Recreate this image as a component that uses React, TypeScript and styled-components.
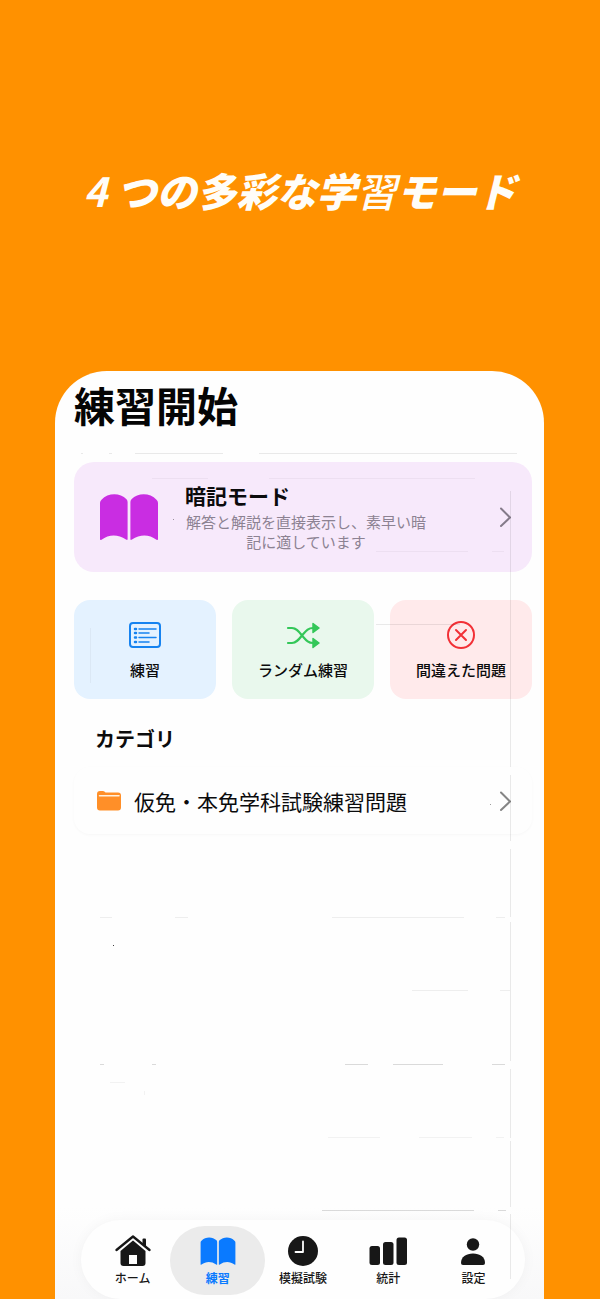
import React from "react";
import styled, { createGlobalStyle } from "styled-components";

const GlobalStyle = createGlobalStyle`
  *, *::before, *::after { box-sizing: border-box; }
  html, body { margin: 0; height: 100%; background: #ff9100; }
  #root { min-height: 100%; display: flex; }
  body, button, a {
    font-family: "Noto Sans CJK JP", sans-serif;
    color: #0b0b0c;
  }
`;

const Page = styled.div`
  flex: 1;
  min-width: 0;
  min-height: 100vh;
  display: flex;
  flex-direction: column;
  background: #ff9100;
`;

const Hero = styled.header`
  padding: 160px 16px 151px;
  text-align: center;
`;

const HeroTitle = styled.h1`
  margin: 0;
  color: #fffdf8;
  font-size: 40px;
  line-height: 60px;
  font-weight: 900;
  font-style: italic;
  white-space: nowrap;
`;

const Digit = styled.span`
  font-weight: 700;
`;

const Light = styled.span`
  font-weight: 500;
`;

const Phone = styled.main`
  position: relative;
  flex: 1;
  display: flex;
  flex-direction: column;
  margin: 0 56px 0 55px;
  border-radius: 52px 52px 0 0;
  background: #fefefe;
`;

const Lines = styled.svg`
  position: absolute;
  inset: 0;
  width: 100%;
  height: 100%;
  pointer-events: none;
`;

const Content = styled.div`
  display: flex;
  flex-direction: column;
  padding: 3px 12px 0 19px;
`;

const ScreenTitle = styled.h2`
  margin: 0 0 28px;
  font-size: 41px;
  line-height: 60px;
  font-weight: 700;
  color: #050505;
`;

const MemoryCard = styled.button`
  display: flex;
  align-items: center;
  height: 110px;
  padding: 0 20px 0 25px;
  border: 0;
  border-radius: 20px;
  background: #f7e9fb;
  text-align: left;
`;

const MemoryText = styled.span`
  flex: 1;
  display: flex;
  flex-direction: column;
  gap: 2px;
  padding: 0 0 2px 26px;
`;

const MemoryTitle = styled.span`
  font-size: 21px;
  line-height: 30px;
  font-weight: 700;
`;

const MemoryNote = styled.span`
  width: 242px;
  font-size: 15px;
  line-height: 20px;
  color: #8c8292;
  text-align: center;
`;

const Modes = styled.div`
  display: grid;
  grid-template-columns: repeat(3, 1fr);
  gap: 16px;
  margin-top: 28px;
`;

const Mode = styled.button<{ $tint: string }>`
  display: flex;
  flex-direction: column;
  align-items: center;
  gap: 6px;
  height: 99px;
  padding: 18px 0 0;
  border: 0;
  border-radius: 16px;
  background: ${(p) => p.$tint};
  font-size: 15px;
  line-height: 24px;
  font-weight: 500;
  white-space: nowrap;
`;

const SectionTitle = styled.h3`
  margin: 25px 0 0 21px;
  font-size: 20px;
  line-height: 30px;
  font-weight: 700;
`;

const Category = styled.a`
  display: flex;
  align-items: center;
  height: 67px;
  margin-top: 13px;
  padding: 0 20px 0 22px;
  border-radius: 16px;
  box-shadow: 0 1px 3px #00000008;
  text-decoration: none;
`;

const CategoryName = styled.span`
  flex: 1;
  padding-left: 12px;
  font-size: 21px;
  line-height: 30px;
`;

const TabArea = styled.div`
  margin-top: auto;
  padding: 14px 19px 0 26px;
  background: linear-gradient(#fefefe, #f8f8f9);
`;

const TabBar = styled.nav`
  display: grid;
  grid-template-columns: repeat(5, 1fr);
  height: 79px;
  padding: 6px 9px 4px;
  border-radius: 40px;
  background: #fefefe;
  box-shadow: 0 0 14px #0000000a;
`;

const Tab = styled.a<{ $active?: boolean }>`
  display: flex;
  flex-direction: column;
  align-items: center;
  gap: 1px;
  height: 69px;
  margin: 0 -5px;
  padding-top: 8px;
  border-radius: 35px;
  background: ${(p) => (p.$active ? "#ebebeb" : "transparent")};
  color: ${(p) => (p.$active ? "#0a7aff" : "#171717")};
  font-size: 12px;
  line-height: 18px;
  font-weight: ${(p) => (p.$active ? 700 : 500)};
  text-decoration: none;
  white-space: nowrap;
`;

const Book = ({ width, height, color }: { width: number; height: number; color: string }) => (
  <svg width={width} height={height} viewBox="0 0 60 48" fill={color} aria-hidden="true">
    <path d="M1 10Q1 8 2.500 6.800C9 -0.400 21 -0.400 27.500 6.200Q28.600 7.200 28.600 9V46Q28.600 47.500 27 46.500C19 41 10 41 2.500 46.700Q1 47.500 1 46Z" />
    <path d="M31.400 9Q31.400 7.200 32.500 6.200C39 -0.400 51 -0.400 57.500 6.800Q59 8 59 10V46Q59 47.500 57.500 46.700C50 41 41 41 33 46.500Q31.400 47.500 31.400 46Z" />
  </svg>
);

const Chevron = ({ color }: { color: string }) => (
  <svg width="14" height="22" viewBox="0 0 14 22" fill="none" stroke={color} strokeWidth="2" strokeLinecap="round" strokeLinejoin="round" aria-hidden="true">
    <path d="M3 2.500L12 11.500L3 20" />
  </svg>
);

const ListIcon = () => (
  <svg width="34" height="34" viewBox="0 0 34 34" fill="none" stroke="#1683f0" strokeWidth="2" aria-hidden="true">
    <rect x="2" y="5" width="30" height="24" rx="3" />
    <path d="M11 11H28M11 15H21M11 19.500H28M11 24H21" strokeWidth="1.500" strokeLinecap="round" />
    <path d="M7 11H8M7 15H8M7 19.500H8M7 24H8" strokeWidth="2.500" strokeLinecap="round" />
  </svg>
);

const ShuffleIcon = () => (
  <svg width="34" height="34" viewBox="0 0 34 34" fill="none" stroke="#34c759" strokeWidth="2.200" strokeLinecap="round" aria-hidden="true">
    <path d="M2 10H6C10 10 12.500 13 16 17.500C20 22 22 25 27 25M2 25H6C10 25 12.500 22 16 17.500C20 13 22 10 27 10" />
    <path d="M27 5.500L33 10L27 14.500ZM27 20.500L33 25L27 29.500Z" fill="#34c759" strokeWidth="1.500" strokeLinejoin="round" />
  </svg>
);

const WrongIcon = () => (
  <svg width="34" height="34" viewBox="0 0 34 34" fill="none" stroke="#f23036" strokeWidth="2" strokeLinecap="round" aria-hidden="true">
    <circle cx="17" cy="17" r="13" />
    <path d="M12 12L22 22M22 12L12 22" />
  </svg>
);

const FolderIcon = () => (
  <svg width="26" height="20" viewBox="0 0 26 20" aria-hidden="true">
    <path d="M1 3Q1 0 4 0H7Q8.500 0 9.500 1.500H22Q25 1.500 25 4.500V16.500Q25 19.500 22 19.500H4Q1 19.500 1 16.500Z" fill="#ff8f28" />
    <path d="M3.500 4.800H23" stroke="#fff1df" strokeWidth="1.500" strokeLinecap="round" />
  </svg>
);

const HomeIcon = () => (
  <svg width="36" height="34" viewBox="0 0 36 34" fill="#171717" aria-hidden="true">
    <path d="M27.500 5.500Q27.500 4.500 28.500 4.500H30Q31 4.500 31 5.500V13L27.500 10Z" />
    <path d="M1.500 16L18 2.500L34.500 16" fill="none" stroke="#171717" strokeWidth="2.300" strokeLinecap="round" strokeLinejoin="round" />
    <path d="M18 6.500L30.500 17V29Q30.500 32 27.500 32H8.500Q5.500 32 5.500 29V17Z" />
    <path d="M14 21H22V30H14Z" fill="#fefefe" />
  </svg>
);

const ClockIcon = () => (
  <svg width="34" height="34" viewBox="0 0 34 34" aria-hidden="true">
    <circle cx="17" cy="17" r="15" fill="#171717" />
    <path d="M17 7.500V18H9.500" fill="none" stroke="#fefefe" strokeWidth="1.800" strokeLinecap="round" strokeLinejoin="round" />
  </svg>
);

const StatsIcon = () => (
  <svg width="38" height="34" viewBox="0 0 38 34" fill="#171717" aria-hidden="true">
    <rect x="0.500" y="12" width="10.500" height="19" rx="2.500" />
    <rect x="14" y="8" width="10.500" height="23" rx="2.500" />
    <rect x="27.500" y="3.500" width="10.500" height="27.500" rx="2.500" />
  </svg>
);

const PersonIcon = () => (
  <svg width="34" height="34" viewBox="0 0 34 34" fill="#171717" aria-hidden="true">
    <circle cx="17" cy="10.500" r="6.200" />
    <path d="M5 29C5 23 10 19.500 17 19.500S29 23 29 29Q29 31 27 31H7Q5 31 5 29Z" />
  </svg>
);

export default function App() {
  return (
    <>
      <GlobalStyle />
      <Page>
        <Hero>
          <HeroTitle>
            <Digit>4</Digit> つの多彩な学<Light>習</Light>モード
          </HeroTitle>
        </Hero>
        <Phone>
          <Content>
            <ScreenTitle>練習開始</ScreenTitle>
            <MemoryCard type="button">
              <Book width={60} height={48} color="#c92de2" />
              <MemoryText>
                <MemoryTitle>暗記モード</MemoryTitle>
                <MemoryNote>解答と解説を直接表示し、素早い暗記に適しています</MemoryNote>
              </MemoryText>
              <Chevron color="#857b8a" />
            </MemoryCard>
            <Modes>
              <Mode type="button" $tint="#e4f2ff">
                <ListIcon />
                練習
              </Mode>
              <Mode type="button" $tint="#e9f8ed">
                <ShuffleIcon />
                ランダム練習
              </Mode>
              <Mode type="button" $tint="#ffeaeb">
                <WrongIcon />
                間違えた問題
              </Mode>
            </Modes>
            <SectionTitle>カテゴリ</SectionTitle>
            <Category href="#category">
              <FolderIcon />
              <CategoryName>仮免・本免学科試験練習問題</CategoryName>
              <Chevron color="#858585" />
            </Category>
          </Content>
          <TabArea>
            <TabBar>
              <Tab href="#home">
                <HomeIcon />
                ホーム
              </Tab>
              <Tab href="#practice" $active aria-current="page">
                <Book width={36} height={34} color="#0a7aff" />
                練習
              </Tab>
              <Tab href="#exam">
                <ClockIcon />
                模擬試験
              </Tab>
              <Tab href="#stats">
                <StatsIcon />
                統計
              </Tab>
              <Tab href="#settings">
                <PersonIcon />
                設定
              </Tab>
            </TabBar>
          </TabArea>
          <Lines aria-hidden="true" fill="none" stroke="#00000015" strokeWidth="1">
            <path d="M26 82.500H28M54 82.500H57M80 82.500H168M204 82.500H462" />
            <path d="M97 107.500H153M214 107.500H420M321 180.500H413M437 180.500H449M35.500 257V312" stroke="#0000000a" />
            <path d="M321 253.500H405" />
            <path d="M455.500 120V396M455.500 404V470M455.500 478V546M455.500 551V690M455.500 698V767M455.500 770V836M455.500 843V908" />
            <path d="M45 546.500H57M120 546.500H133M277 546.500H409M441 546.500H450M357 619.500H413M445 619.500H455" stroke="#00000010" />
            <path d="M45 693.500H49M97 693.500H101M290 693.500H313M338 693.500H388M437 693.500H450" stroke="#00000024" />
            <path d="M55 711.500H70M89.500 720V724M273 766.500H325M364 766.500H417M441 766.500H449" stroke="#0000000c" />
            <path d="M267 839.500H419M443 839.500H451" stroke="#00000024" />
            <path d="M118 148.500H119M435 433.500H436" stroke="#00000060" />
            <path d="M58 574.500H59" stroke="#000000c0" />
          </Lines>
        </Phone>
      </Page>
    </>
  );
}
